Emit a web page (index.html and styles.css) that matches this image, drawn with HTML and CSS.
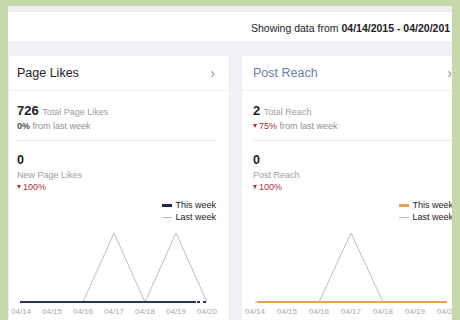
FILE: index.html
```html
<!DOCTYPE html>
<html>
<head>
<meta charset="utf-8">
<link rel="stylesheet" href="styles.css">
</head>
<body>
<div class="page">
  <div class="topstrip"></div>
  <div class="header">
    <div class="header-spacer"></div>
    <div class="range">Showing data from <b>04/14/2015 - 04/20/2015</b></div>
  </div>
  <div class="cards">
    <div class="card">
      <div class="card-head">
        <span class="title">Page Likes</span>
        <span class="chev">&#8250;</span>
      </div>
      <div class="card-body">
        <div class="total"><span class="big">726</span> <span class="muted">Total Page Likes</span></div>
        <div class="change"><span class="flat">0%</span> from last week</div>
        <div class="divider"></div>
        <div class="num">0</div>
        <div class="label">New Page Likes</div>
        <div class="down"><span class="tri"></span>100%</div>
        <div class="legend">
          <div class="leg"><span class="mark this-navy"></span>This week</div>
          <div class="leg"><span class="mark last"></span>Last week</div>
        </div>
      </div>
      <svg class="chart" width="220" height="95" viewBox="0 0 220 95">
        <polyline points="12,77 74,77 105,8 136,77 167,8 198,77" fill="none" stroke="#bcbdc1" stroke-width="1"/>
        <line x1="11" y1="77" x2="187" y2="77" stroke="#2c3550" stroke-width="2"/>
        <line x1="188" y1="77" x2="199" y2="77" stroke="#2c3550" stroke-width="2" stroke-dasharray="3 3"/>
        <g class="ticks" fill="#a4a8b0" font-size="8">
          <text x="12" y="89" text-anchor="middle">04/14</text>
          <text x="43" y="89" text-anchor="middle">04/15</text>
          <text x="74" y="89" text-anchor="middle">04/16</text>
          <text x="105" y="89" text-anchor="middle">04/17</text>
          <text x="136" y="89" text-anchor="middle">04/18</text>
          <text x="167" y="89" text-anchor="middle">04/19</text>
          <text x="198" y="89" text-anchor="middle">04/20</text>
        </g>
      </svg>
    </div>
    <div class="card right">
      <div class="card-head">
        <span class="title blue">Post Reach</span>
        <span class="chev">&#8250;</span>
      </div>
      <div class="card-body">
        <div class="total"><span class="big">2</span> <span class="muted">Total Reach</span></div>
        <div class="change"><span class="tri"></span><span class="red">75%</span> from last week</div>
        <div class="divider"></div>
        <div class="num">0</div>
        <div class="label">Post Reach</div>
        <div class="down"><span class="tri"></span>100%</div>
        <div class="legend">
          <div class="leg"><span class="mark this-orange"></span>This week</div>
          <div class="leg"><span class="mark last"></span>Last week</div>
        </div>
      </div>
      <svg class="chart" width="224" height="95" viewBox="0 0 224 95">
        <polyline points="13,77 77,77 109,8 141,77 205,77" fill="none" stroke="#bcbdc1" stroke-width="1"/>
        <line x1="15" y1="77" x2="205" y2="77" stroke="#e8a24f" stroke-width="2"/>
        <g class="ticks" fill="#a4a8b0" font-size="8">
          <text x="13" y="89" text-anchor="middle">04/14</text>
          <text x="45" y="89" text-anchor="middle">04/15</text>
          <text x="77" y="89" text-anchor="middle">04/16</text>
          <text x="109" y="89" text-anchor="middle">04/17</text>
          <text x="141" y="89" text-anchor="middle">04/18</text>
          <text x="173" y="89" text-anchor="middle">04/19</text>
          <text x="205" y="89" text-anchor="middle">04/20</text>
        </g>
      </svg>
    </div>
  </div>
</div>
</body>
</html>
```

FILE: styles.css
```css
html, body {
  margin: 0;
  padding: 0;
  background: #c5d9aa;
  height: 320px;
  overflow: hidden;
}
body {
  font-family: "Liberation Sans", Arial, sans-serif;
  color: #1d2129;
  padding-top: 6px;
  box-sizing: border-box;
}
.page {
  margin: 0 8px;
  width: 444px;
  height: 330px;
  background: #f1f2f5;
  overflow: hidden;
}
.topstrip {
  height: 6px;
  background: #eceef1;
}
.header {
  display: grid;
  grid-template-columns: 243px 199px;
  height: 30px;
  background: #fff;
  border-bottom: 1px solid #e6e7ea;
  align-items: center;
}
.range {
  font-size: 10.5px;
  white-space: nowrap;
  overflow: hidden;
  padding-top: 2px;
  color: #1d2129;
}
.range b { font-weight: bold; }
.cards {
  display: grid;
  grid-template-columns: 220px 224px;
  column-gap: 13px;
  padding: 13px 0 0 1px;
}
.card {
  background: #fff;
  box-shadow: 0 0 1px rgba(0,0,0,0.12);
  height: 280px;
}
.card-head {
  height: 34px;
  border-bottom: 1px solid #eef0f2;
  display: flex;
  align-items: center;
  justify-content: space-between;
  padding: 0 14px 0 8px;
}
.right .card-head { padding-left: 11px; }
.title { font-size: 12.5px; }
.title.blue { color: #6b7fa9; }
.chev {
  color: #8d9199;
  font-size: 14px;
}
.card-body {
  padding: 12px 13px 0 8px;
}
.right .card-body { padding-left: 11px; }
.total { font-size: 13px; line-height: 16px; height: 16px; }
.big { font-weight: bold; }
.muted { font-size: 9px; line-height: 10px; color: #9a9ea6; }
.change { font-size: 9px; line-height: 12px; color: #8d9199; margin-top: 1px; }
.flat { color: #4b4f56; font-weight: bold; }
.red { color: #a2323c; }
.tri {
  display: inline-block;
  width: 0;
  height: 0;
  border-left: 2.5px solid transparent;
  border-right: 2.5px solid transparent;
  border-top: 4px solid #a2323c;
  margin-right: 2px;
  vertical-align: 1px;
}
.divider {
  border-top: 1px solid #e9eaed;
  margin-top: 8px;
  height: 0;
}
.num { font-size: 12.5px; font-weight: bold; line-height: 16px; margin-top: 11px; }
.label { font-size: 9px; color: #9a9ea6; line-height: 12px; margin-top: 1px; }
.down { font-size: 9px; color: #a2323c; line-height: 12px; }
.legend {
  margin-top: 6px;
  display: flex;
  flex-direction: column;
  align-items: flex-end;
  font-size: 9px;
  line-height: 12px;
  color: #1d2129;
}
.leg { display: flex; align-items: center; }
.mark { display: inline-block; width: 10px; margin-right: 3px; }
.this-navy { height: 3px; background: #1f2a4a; }
.this-orange { height: 3px; background: #e8a24f; }
.last { height: 1px; background: #b8b9bd; }
.chart { display: block; margin-top: 2px; }
.ticks { font-family: "Liberation Sans", Arial, sans-serif; }
```
